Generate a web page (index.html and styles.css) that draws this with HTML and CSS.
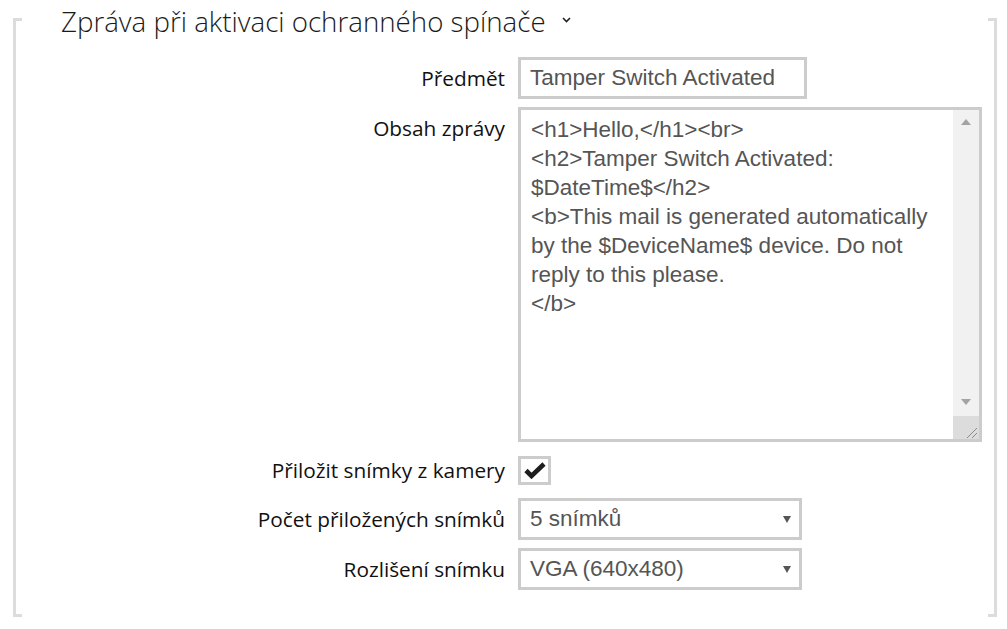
FILE: index.html
```html
<!DOCTYPE html>
<html lang="cs">
<head>
<meta charset="utf-8">
<title>Zpráva při aktivaci ochranného spínače</title>
<link rel="stylesheet" href="styles.css">
</head>
<body>
<section class="panel">
  <h2 class="panel-title"><span>Zpráva při aktivaci ochranného spínače</span><span class="chevron"><svg width="9" height="6" viewBox="0 0 9 6"><polyline points="1,1 4.5,4.5 8,1" fill="none" stroke="#222" stroke-width="1.6"/></svg></span></h2>
  <div class="form">
    <label class="label">Předmět</label>
    <div class="control"><div class="input">Tamper Switch Activated</div></div>

    <label class="label">Obsah zprávy</label>
    <div class="control">
      <div class="textarea">
        <div class="textarea-text">&lt;h1&gt;Hello,&lt;/h1&gt;&lt;br&gt;
&lt;h2&gt;Tamper Switch Activated:
$DateTime$&lt;/h2&gt;
&lt;b&gt;This mail is generated automatically
by the $DeviceName$ device. Do not
reply to this please.
&lt;/b&gt;</div>
        <div class="scrollbar">
          <span class="sb-arrow sb-up"></span>
          <span class="sb-track"></span>
          <span class="sb-arrow sb-down"></span>
          <span class="sb-grip"><svg width="26" height="23" viewBox="0 0 26 23"><line x1="14" y1="22" x2="24" y2="12" stroke="#8a8a8a" stroke-width="1"/><line x1="19" y1="22" x2="24" y2="17" stroke="#8a8a8a" stroke-width="1"/></svg></span>
        </div>
      </div>
    </div>

    <label class="label label-center">Přiložit snímky z kamery</label>
    <div class="control control-check">
      <div class="checkbox"><svg width="24" height="17" viewBox="0 0 24 17"><polyline points="3,8.5 8.5,14 21,2" fill="none" stroke="#1e1e1e" stroke-width="4.6"/></svg></div>
    </div>

    <label class="label">Počet přiložených snímků</label>
    <div class="control"><div class="select"><span>5 snímků</span><span class="caret"></span></div></div>

    <label class="label">Rozlišení snímku</label>
    <div class="control"><div class="select"><span>VGA (640x480)</span><span class="caret"></span></div></div>
  </div>
</section>
</body>
</html>
```

FILE: styles.css
```css
* { box-sizing: border-box; }
html, body { margin: 0; padding: 0; background: #fff; }
body { width: 1007px; height: 629px; overflow: hidden; }

.panel {
  display: flow-root;
  margin: 18px 10px 0 13px;
  height: 599px;
  border-left: 3px solid #dcdcdc;
  border-right: 3px solid #dcdcdc;
  background-origin: border-box;
  background-clip: border-box;
  background-repeat: no-repeat;
  background-image:
    linear-gradient(#dcdcdc, #dcdcdc),
    linear-gradient(#dcdcdc, #dcdcdc),
    linear-gradient(#dcdcdc, #dcdcdc),
    linear-gradient(#dcdcdc, #dcdcdc);
  background-size: 9px 3px, 9px 3px, 9px 3px, 9px 3px;
  background-position: left top, right top, left bottom, right bottom;
}

.panel-title {
  margin: -14px 0 0 45px;
  font-family: "Open Sans", sans-serif;
  font-weight: 300;
  font-size: 27.7px;
  line-height: 34px;
  color: #1a1a1a;
  display: flex;
  align-items: center;
  gap: 16px;
}
.chevron { display: inline-flex; margin-top: -2px; }

.form {
  margin-top: 19px;
  display: grid;
  grid-template-columns: 489px 1fr;
  column-gap: 13px;
  row-gap: 8px;
  align-items: start;
}

.label {
  text-align: right;
  font-family: "Open Sans", sans-serif;
  font-size: 20.8px;
  line-height: 42px;
  color: #111;
  white-space: nowrap;
}
.label-center { line-height: 29px; margin: 6px 0 5px; }

.control { display: flex; }

.input, .select {
  height: 42px;
  border: 3px solid #cccccc;
  font-family: "Liberation Sans", Arial, sans-serif;
  font-size: 22.5px;
  line-height: 36px;
  color: #555;
  padding: 0 9px;
  background: #fff;
}
.input { width: 289px; white-space: nowrap; }
.select {
  width: 284px;
  display: flex;
  justify-content: space-between;
  align-items: center;
  padding-right: 8px;
}
.caret {
  width: 0; height: 0;
  border-left: 4px solid transparent;
  border-right: 4px solid transparent;
  border-top: 7px solid #555;
}

.textarea {
  width: 464px;
  height: 335px;
  border: 3px solid #cccccc;
  display: flex;
  background: #fff;
}
.textarea-text {
  flex: 1;
  padding: 5px 0 0 10px;
  white-space: pre;
  font-family: "Liberation Sans", Arial, sans-serif;
  font-size: 22.5px;
  line-height: 29px;
  color: #555;
  overflow: hidden;
}
.scrollbar {
  width: 26px;
  background: #f1f1f1;
  display: flex;
  flex-direction: column;
  align-items: center;
}
.sb-arrow {
  width: 0; height: 0;
  border-left: 5px solid transparent;
  border-right: 5px solid transparent;
}
.sb-up { border-bottom: 6px solid #a3a3a3; margin-top: 9px; }
.sb-down { border-top: 6px solid #a3a3a3; margin-bottom: 11px; }
.sb-track { flex: 1; }
.sb-grip {
  width: 26px;
  height: 23px;
  background: #dcdcdc;
  display: block;
}
.sb-grip svg { display: block; }

.control-check { margin: 6px 0 5px; }
.checkbox {
  width: 33px;
  height: 29px;
  border: 3px solid #cccccc;
  display: flex;
  align-items: center;
  justify-content: center;
  background: #fff;
}
.checkbox svg { display: block; }
```
